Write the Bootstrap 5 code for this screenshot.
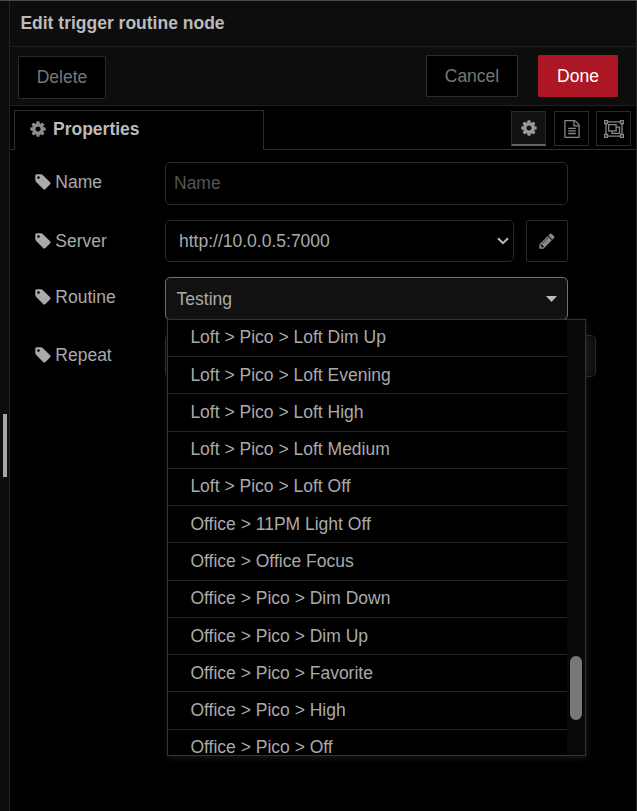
<!DOCTYPE html>
<html lang="en" data-bs-theme="dark">
<head>
<meta charset="utf-8">
<meta name="viewport" content="width=device-width, initial-scale=1">
<title>Edit trigger routine node</title>
<link href="https://cdn.jsdelivr.net/npm/bootstrap@5.3.0/dist/css/bootstrap.min.css" rel="stylesheet">
<style>
  body { font: 17.5px/25px "Liberation Sans", Arial, sans-serif; background: #000; color: #aaa; }
  .editor { height: 811px; border-top: 1px solid #4a4a4a; }
  .gutter { width: 10px; background: #0d0d0d; border-right: 1px solid #222; padding-left: 3px; }
  .grip { width: 4px; height: 63px; background: #a6a6a6; margin-top: 413px; }
  .tray { border-right: 1px solid #272727; min-width: 0; }
  .tray-title { height: 46px; background: #0d0d0d; border-bottom: 1px solid #1f1f1f; padding: 10px 10px 10px 10.4px; color: #bbb; }
  .tray-bar { height: 59px; background: #0d0d0d; border-bottom: 1px solid #1f1f1f; padding: 8px 18px 0 8px; gap: 20px; }
  .tray-btn { --bs-btn-color: #777; --bs-btn-bg: #000; --bs-btn-border-color: #2a2a2a; --bs-btn-font-size: 17.5px; --bs-btn-line-height: 25px; --bs-btn-border-radius: 1px; --bs-btn-padding-x: 0; --bs-btn-padding-y: 0; width: 92px; height: 42px; }
  .tray-btn.delete { width: 88px; height: 43px; margin-top: 1px; }
  .tray-btn.done { --bs-btn-color: #fff; --bs-btn-bg: #ad1625; --bs-btn-border-color: #ad1625; width: 80px; }
  .tab-strip { height: 44px; padding-top: 4px; }
  .tab-edge { width: 4px; border-bottom: 1px solid #2e2e2e; }
  .tab-rest { border-bottom: 1px solid #2e2e2e; gap: 8px; padding: 1px 5px 0 0; }
  .tab-main { width: 250px; border: 1px solid #2e2e2e; border-bottom: 0; padding: 0 0 2px 14px; color: #bbb; }
  .tab-main .glyph { margin: 0 6px 1px 0; }
  .tool { width: 35px; height: 35px; border: 1px solid #2a2a2a; color: #888; }
  .tool.current { background: #111; border-bottom: 2px solid #666; color: #999; }
  .tool + .tool:last-child { margin-left: -1px; }
  .glyph { width: 18px; height: 18px; fill: currentColor; flex: none; }
  .form-area { padding: 12px 0 0 24px; gap: 15px; }
  .caption { width: 131px; padding-top: 8px; }
  .caption .glyph { margin: 2.6px 3.3px 0 0; }
  .server-caption { padding-top: 9px; }
  .field { border: 1px solid #2a2a2a; border-radius: 5px; height: 42px; background: #000; color: #aaa; }
  .field-name { width: 403px; height: 43px; padding: 0 8px; font-size: 17.5px; }
  .field-name::placeholder { color: #555; opacity: 1; }
  .field-name:focus { background: #000; border-color: #2a2a2a; box-shadow: none; }
  .field-server { width: 349px; padding: 0 4px 0 13px; }
  .edit-server { width: 42px; margin-left: 12px; border-radius: 2px; color: #888; }
  .field-routine { width: 403px; height: 43px; padding: 1px 10px 0 10.600px; background: #111; border: 1px solid #4279bd; }
  .field-repeat { width: 431px; background: #111; box-shadow: inset 0 0 3px #000; }
  .choices { top: 42px; left: 133px; width: 419px; height: 437px; border: 1px solid #333; background: #000; box-shadow: 1px 2px 6px rgba(80,80,80,.3); z-index: 2; }
  .choice-list { width: 399px; height: 435px; overflow: hidden; }
  .choice { height: 37.27px; border-bottom: 1px solid #222; padding: 5.7px 0 0 22.4px; white-space: nowrap; }
  .choice:first-child { margin-top: -.3px; }
  .track { width: 18px; background: #080808; padding: 336px 3px 0; }
  .thumb { height: 64px; background: #777; border-radius: 6px; }
</style>
<script src="https://cdn.jsdelivr.net/npm/bootstrap@5.3.0/dist/js/bootstrap.bundle.min.js"></script>
</head>
<body class="overflow-hidden">
<svg class="d-none" aria-hidden="true">
  <symbol id="gear" viewBox="0 0 1792 1792"><path d="M1152 896q0-106-75-181t-181-75-181 75-75 181 75 181 181 75 181-75 75-181zm512-109v222q0 12-8 23t-20 13l-185 28q-19 54-39 91 35 50 107 138 10 12 10 25t-9 23q-27 37-99 108t-94 71q-12 0-26-9l-138-108q-44 23-91 38-16 136-29 186-7 28-36 28h-222q-14 0-24.500-8.500t-11.500-21.500l-28-184q-49-16-90-37l-141 107q-10 9-25 9-14 0-25-11-126-114-165-168-7-10-7-23 0-12 8-23 15-21 51-66.500t54-70.500q-27-50-41-99l-183-27q-13-2-21-12.500t-8-23.500v-222q0-12 8-23t19-13l186-28q14-46 39-92-40-57-107-138-10-12-10-24 0-10 9-23 26-36 98.500-107.500t94.500-71.500q13 0 26 10l138 107q44-23 91-38 16-136 29-186 7-28 36-28h222q14 0 24.500 8.500t11.500 21.500l28 184q49 16 90 37l142-107q9-9 24-9 13 0 25 10 129 119 165 170 7 8 7 22 0 12-8 23-15 21-51 66.500t-54 70.500q26 50 41 98l183 28q13 2 21 12.500t8 23.500z"/></symbol>
  <symbol id="tag" viewBox="0 0 1792 1792"><path d="M576 448q0-53-37.500-90.500t-90.500-37.500-90.500 37.500-37.500 90.500 37.500 90.500 90.500 37.500 90.500-37.500 37.500-90.500zm1067 576q0 53-37 90l-491 492q-39 37-91 37-53 0-90-37l-715-716q-38-37-64.500-101t-26.500-117v-416q0-52 38-90t90-38h416q53 0 117 26.500t102 64.500l715 714q37 39 37 91z"/></symbol>
  <symbol id="pencil" viewBox="0 0 1792 1792"><path d="M491 1536l91-91-235-235-91 91v107h128v128h107zm523-928q0-22-22-22-10 0-17 7l-542 542q-7 7-7 17 0 22 22 22 10 0 17-7l542-542q7-7 7-17zm-54-192l416 416-832 832h-416v-416zm683 96q0 53-37 90l-166 166-416-416 166-165q36-38 90-38 53 0 91 38l235 234q37 39 37 91z"/></symbol>
  <symbol id="doc" viewBox="0 0 1792 1792"><path d="M1596 380q28 28 48 76t20 88v1152q0 40-28 68t-68 28h-1344q-40 0-68-28t-28-68v-1600q0-40 28-68t68-28h896q40 0 88 20t76 48zm-444-244v376h376q-10-29-22-41l-313-313q-12-12-41-22zm384 1528v-1024h-416q-40 0-68-28t-28-68v-416h-768v1536h1280zm-1024-864q0-14 9-23t23-9h704q14 0 23 9t9 23v64q0 14-9 23t-23 9h-704q-14 0-23-9t-9-23v-64zm736 224q14 0 23 9t9 23v64q0 14-9 23t-23 9h-704q-14 0-23-9t-9-23v-64q0-14 9-23t23-9h704zm0 256q14 0 23 9t9 23v64q0 14-9 23t-23 9h-704q-14 0-23-9t-9-23v-64q0-14 9-23t23-9h704z"/></symbol>
</svg>

<div class="editor d-flex">
  <div class="gutter flex-shrink-0"><div class="grip"></div></div>
  <main class="tray flex-grow-1">
    <header class="tray-title fw-bold">Edit trigger routine node</header>
    <div class="tray-bar d-flex">
      <button class="btn tray-btn delete me-auto">Delete</button>
      <button class="btn tray-btn">Cancel</button>
      <button class="btn tray-btn done">Done</button>
    </div>
    <div class="tab-strip d-flex">
      <div class="tab-edge"></div>
      <div class="tab-main d-flex align-items-center fw-bold"><svg class="glyph opacity-75"><use href="#gear"/></svg><span>Properties</span></div>
      <div class="tab-rest d-flex flex-grow-1 justify-content-end">
        <div class="tool current d-flex align-items-center justify-content-center"><svg class="glyph"><use href="#gear"/></svg></div>
        <div class="tool d-flex align-items-center justify-content-center"><svg class="glyph"><use href="#doc"/></svg></div>
        <div class="tool d-flex align-items-center justify-content-center">
          <svg width="20" height="18" viewBox="0 0 20 18" fill="none" stroke="currentColor" stroke-width="1.300"><path d="M3.500 1.900h13M3.500 16.100h13M2 3.500v11M18 3.500v11M.6.600h2.900v2.900H.6zM16.500.600h2.900v2.900h-2.900zM.6 14.500h2.900v2.900H.6zM16.500 14.500h2.900v2.900h-2.900zM4.700 4.600h7.400v6.200H4.700zM12.100 7.100h3.400v6.300H8v-2.600"/></svg>
        </div>
      </div>
    </div>

    <div class="form-area d-flex flex-column">
      <div class="d-flex">
        <label class="caption d-flex align-items-start" for="node-name"><svg class="glyph"><use href="#tag"/></svg>Name</label>
        <input id="node-name" class="form-control field field-name" placeholder="Name">
      </div>
      <div class="d-flex">
        <div class="caption server-caption d-flex align-items-start"><svg class="glyph"><use href="#tag"/></svg>Server</div>
        <div class="field field-server d-flex align-items-center justify-content-between">http://10.0.0.5:7000
          <svg width="12" height="8" viewBox="0 0 12 8" fill="none" stroke="#bbb" stroke-width="2"><path d="M1 1.200l5 5 5-5"/></svg>
        </div>
        <div class="field edit-server d-flex align-items-center justify-content-center"><svg class="glyph"><use href="#pencil"/></svg></div>
      </div>
      <div class="d-flex position-relative">
        <div class="caption d-flex align-items-start"><svg class="glyph"><use href="#tag"/></svg>Routine</div>
        <div class="field field-routine d-flex align-items-center justify-content-between">Testing
          <svg width="11" height="6" viewBox="0 0 11 6" fill="#bbb"><path d="M0 0h11L5.500 6z"/></svg>
        </div>
        <div class="choices position-absolute d-flex">
          <div class="choice-list">
            <div class="choice">Loft &gt; Pico &gt; Loft Dim Up</div>
            <div class="choice">Loft &gt; Pico &gt; Loft Evening</div>
            <div class="choice">Loft &gt; Pico &gt; Loft High</div>
            <div class="choice">Loft &gt; Pico &gt; Loft Medium</div>
            <div class="choice">Loft &gt; Pico &gt; Loft Off</div>
            <div class="choice">Office &gt; 11PM Light Off</div>
            <div class="choice">Office &gt; Office Focus</div>
            <div class="choice">Office &gt; Pico &gt; Dim Down</div>
            <div class="choice">Office &gt; Pico &gt; Dim Up</div>
            <div class="choice">Office &gt; Pico &gt; Favorite</div>
            <div class="choice">Office &gt; Pico &gt; High</div>
            <div class="choice">Office &gt; Pico &gt; Off</div>
          </div>
          <div class="track"><div class="thumb"></div></div>
        </div>
      </div>
      <div class="d-flex">
        <div class="caption d-flex align-items-start"><svg class="glyph"><use href="#tag"/></svg>Repeat</div>
        <div class="field field-repeat"></div>
      </div>
    </div>
  </main>
</div>
</body>
</html>
